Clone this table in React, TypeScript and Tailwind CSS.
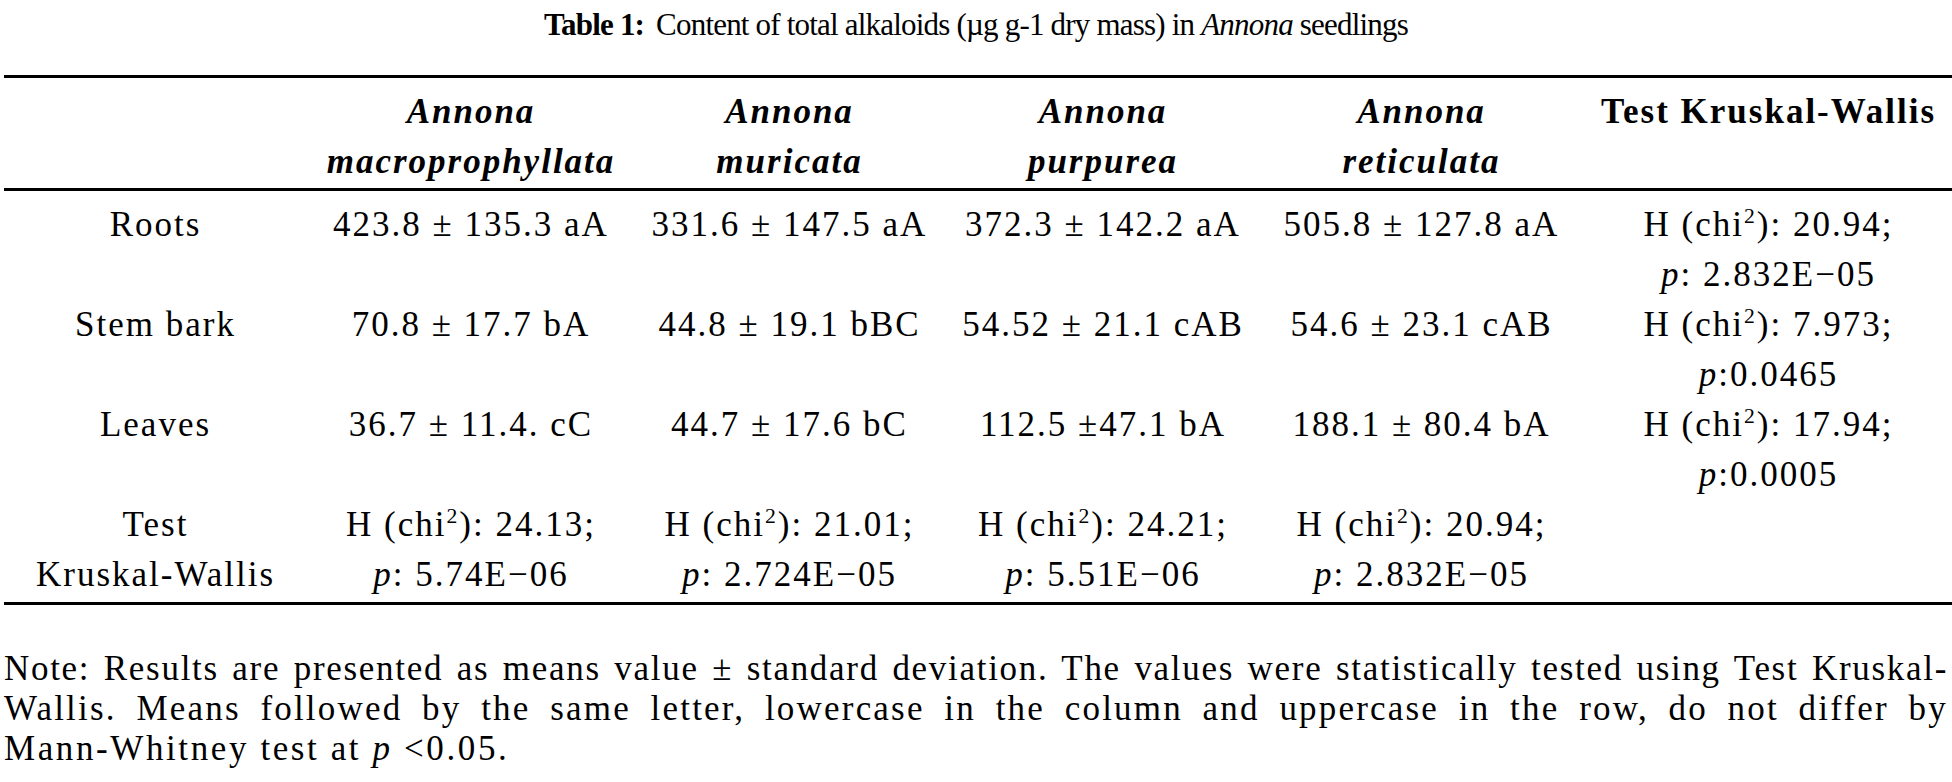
import React from 'react';

const cols = 'grid grid-cols-[311px_320px_317px_310px_327px_367px]';

const Pval = ({ v }: { v: string }) => (
  <span>
    <i>p</i>
    {v}
  </span>
);

const Chi = ({ v }: { v: string }) => (
  <span>
    H (chi<sup className="text-[62%] relative -top-[13px]">2</sup>): {v};
  </span>
);

const Cell: React.FC<{ children: React.ReactNode }> = ({ children }) => (
  <div className="flex flex-col items-center whitespace-nowrap">{children}</div>
);

const rows: { name: React.ReactNode; vals: string[]; kw: [string, string] }[] = [
  {
    name: 'Roots',
    vals: ['423.8 ± 135.3 aA', '331.6 ± 147.5 aA', '372.3 ± 142.2 aA', '505.8 ± 127.8 aA'],
    kw: ['20.94', ': 2.832E−05'],
  },
  {
    name: 'Stem bark',
    vals: ['70.8 ± 17.7 bA', '44.8 ± 19.1 bBC', '54.52 ± 21.1 cAB', '54.6 ± 23.1 cAB'],
    kw: ['7.973', ':0.0465'],
  },
  {
    name: 'Leaves',
    vals: ['36.7 ± 11.4. cC', '44.7 ± 17.6 bC', '112.5 ±47.1 bA', '188.1 ± 80.4 bA'],
    kw: ['17.94', ':0.0005'],
  },
];

const lastRow: [string, string][] = [
  ['24.13', ': 5.74E−06'],
  ['21.01', ': 2.724E−05'],
  ['24.21', ': 5.51E−06'],
  ['20.94', ': 2.832E−05'],
];

const species = ['macroprophyllata', 'muricata', 'purpurea', 'reticulata'];

export default function App() {
  return (
    <div className="w-[1952px] h-[782px] bg-white text-black font-['Liberation_Serif',serif] text-[35px] overflow-hidden">
      <div className="h-[50px] leading-[50px] text-center whitespace-nowrap text-[31px] tracking-[-0.8px]">
        <b>Table 1:</b>
        <span className="ml-[12px]">
          Content of total alkaloids (µg g-1 dry mass) in <i>Annona</i> seedlings
        </span>
      </div>

      <div className="mt-[25px] ml-[4px] h-[3px] bg-black" />

      <div className="tracking-[2px] leading-[50px]">
        <div className={`${cols} pt-[9px]`}>
          <div />
          {species.map((s) => (
            <Cell key={s}>
              <span className="italic font-bold">Annona</span>
              <span className="italic font-bold">{s}</span>
            </Cell>
          ))}
          <Cell>
            <span className="font-bold">Test Kruskal-Wallis</span>
          </Cell>
        </div>

        <div className="mt-[1px] ml-[4px] h-[3px] bg-black" />

        <div className="pt-[9px]">
          {rows.map((r, i) => (
            <div key={i} className={`${cols} h-[100px]`}>
              <Cell>{r.name}</Cell>
              {r.vals.map((v, j) => (
                <Cell key={j}>{v}</Cell>
              ))}
              <Cell>
                <Chi v={r.kw[0]} />
                <Pval v={r.kw[1]} />
              </Cell>
            </div>
          ))}
          <div className={`${cols} h-[100px]`}>
            <Cell>
              <span>Test</span>
              <span>Kruskal-Wallis</span>
            </Cell>
            {lastRow.map((k, j) => (
              <Cell key={j}>
                <Chi v={k[0]} />
                <Pval v={k[1]} />
              </Cell>
            ))}
            <div />
          </div>
        </div>

        <div className="mt-[2px] ml-[4px] h-[3px] bg-black" />

        <div className="mt-[44px] px-[4px] leading-[40px]">
          <div className="text-justify [text-align-last:justify] whitespace-nowrap tracking-[1.7px]">
            Note: Results are presented as means value ± standard deviation. The values were statistically tested using Test Kruskal-
          </div>
          <div className="text-justify [text-align-last:justify] tracking-[2.2px]">
            Wallis. Means followed by the same letter, lowercase in the column and uppercase in the row, do not differ by
          </div>
          <div className="tracking-[2.6px]">
            Mann-Whitney test at <i>p</i> &lt;0.05.
          </div>
        </div>
      </div>
    </div>
  );
}
